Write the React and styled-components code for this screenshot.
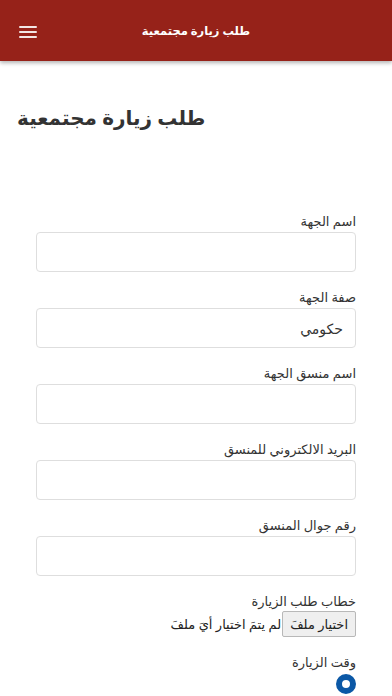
import styled, { createGlobalStyle } from "styled-components";

const GlobalStyle = createGlobalStyle`
  html, body {
    margin: 0;
    padding: 0;
    background: #fff;
    font-family: "Noto Sans", "DejaVu Sans", sans-serif;
    color: #333;
  }
  * { box-sizing: border-box; }
`;

const Page = styled.div`
  width: 392px;
  min-height: 696px;
  overflow: hidden;
`;

const Header = styled.header`
  height: 61px;
  background: #962219;
  display: flex;
  align-items: center;
  box-shadow: 0 2px 4px rgba(0, 0, 0, 0.3);
  padding: 0 19px;
`;

const MenuButton = styled.div`
  width: 18px;
  display: flex;
  flex-direction: column;
  gap: 3px;
  margin-top: 2px;
`;

const MenuLine = styled.span`
  display: block;
  height: 2px;
  background: #f3e6e4;
  border-radius: 1px;
`;

const HeaderTitle = styled.h1`
  flex: 1;
  margin: 0 18px 0 0;
  text-align: center;
  font-size: 11.5px;
  font-weight: 700;
  color: #fff;
  direction: rtl;
`;

const PageHeading = styled.h2`
  margin: 41px 0 0;
  padding-left: 17px;
  direction: rtl;
  text-align: left;
  font-size: 20px;
  font-weight: 700;
  color: #333;
  line-height: 32px;
`;

const Form = styled.form`
  direction: rtl;
  padding: 77px 36px 0 36px;
  display: flex;
  flex-direction: column;
  gap: 15px;
`;

const Field = styled.div`
  display: flex;
  flex-direction: column;
  align-items: stretch;
`;

const Label = styled.label`
  font-size: 13px;
  line-height: 20px;
  height: 20px;
  margin-bottom: ${(p) => (p.$tight ? "0" : "1px")};
  color: #333;
`;

const Input = styled.div`
  height: 40px;
  border: 1px solid #dedede;
  border-radius: 4px;
  background: #fff;
  display: flex;
  align-items: center;
  padding: 0 12px;
  font-size: 14px;
  color: #333;
`;

const FileRow = styled.div`
  display: flex;
  align-items: center;
  gap: 1px;
`;

const FileButton = styled.span`
  height: 26px;
  padding: 0 7px;
  display: flex;
  align-items: center;
  background: #efefef;
  border: 1px solid #b8b8b8;
  border-radius: 2px;
  font-size: 13px;
  color: #222;
`;

const FileText = styled.span`
  font-size: 13px;
  color: #222;
`;

const Radio = styled.span`
  display: block;
  width: 20px;
  height: 20px;
  border-radius: 50%;
  border: 6px solid #0b58a6;
  background: #fff;
  margin-top: 2px;
`;

const fields = [
  { label: "اسم الجهة", value: "" },
  { label: "صفة الجهة", value: "حكومي" },
  { label: "اسم منسق الجهة", value: "" },
  { label: "البريد الالكتروني للمنسق", value: "" },
  { label: "رقم جوال المنسق", value: "" },
];

export default function App() {
  return (
    <Page>
      <GlobalStyle />
      <Header>
        <MenuButton>
          <MenuLine />
          <MenuLine />
          <MenuLine />
        </MenuButton>
        <HeaderTitle>طلب زيارة مجتمعية</HeaderTitle>
      </Header>
      <PageHeading>طلب زيارة مجتمعية</PageHeading>
      <Form>
        {fields.map((f) => (
          <Field key={f.label}>
            <Label>{f.label}</Label>
            <Input>{f.value}</Input>
          </Field>
        ))}
        <Field>
          <Label $tight>خطاب طلب الزيارة</Label>
          <FileRow>
            <FileButton>اختيار ملفَ</FileButton>
            <FileText>لم يتمَ اختيار أيَ ملفَ</FileText>
          </FileRow>
        </Field>
        <Field>
          <Label $tight>وقت الزيارة</Label>
          <Radio />
        </Field>
      </Form>
    </Page>
  );
}
